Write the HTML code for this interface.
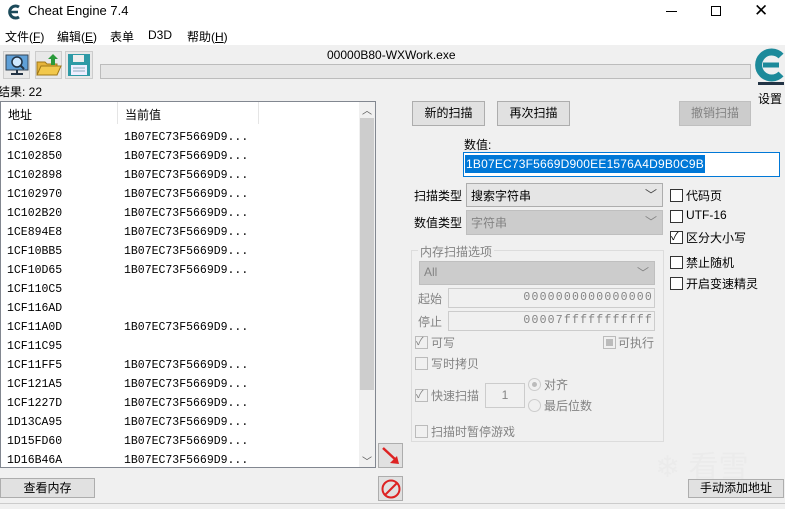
<!DOCTYPE html>
<html><head><meta charset="utf-8"><style>
*{box-sizing:border-box;margin:0;padding:0}
body{width:785px;height:509px;background:#f0f0f0;font-family:"Liberation Sans","Noto Sans CJK SC",sans-serif;font-size:12px;color:#000;position:relative;overflow:hidden}
.a{position:absolute;white-space:nowrap}
.btn{position:absolute;background:#e1e1e1;border:1px solid #adadad;text-align:center;font-size:12px}
.cb{position:absolute;width:13px;height:13px;border:1px solid #333;background:#fff}
.dis{color:#838383}
.mono{font-family:"Liberation Mono","DejaVu Sans Mono",monospace;font-size:11.5px}
</style></head><body>
<div class="a" style="left:0;top:0;width:785px;height:45px;background:#fff"></div>
<svg class="a" style="left:6px;top:4px" width="16" height="16" viewBox="0 0 16 16"><path d="M13 3A6 6 0 1 0 13 13" stroke="#1b4a5a" stroke-width="3" fill="none"/><path d="M5 8h7" stroke="#1b4a5a" stroke-width="2.5"/></svg>
<div class="a" style="left:28px;top:3px;font-size:13px">Cheat Engine 7.4</div>
<div class="a" style="left:666px;top:11px;width:11px;border-top:1px solid #000"></div>
<div class="a" style="left:711px;top:6px;width:10px;height:10px;border:1px solid #000"></div>
<div class="a" style="left:754px;top:2px;font-size:17px;line-height:17px">✕</div>
<div class="a" style="left:5px;top:28px">文件(<u>F</u>)</div>
<div class="a" style="left:57px;top:28px">编辑(<u>E</u>)</div>
<div class="a" style="left:110px;top:28px">表单</div>
<div class="a" style="left:148px;top:28px">D3D</div>
<div class="a" style="left:187px;top:28px">帮助(<u>H</u>)</div>
<div class="a" style="left:3px;top:51px;width:27px;height:28px;background:#e8e8e8;border:1px solid #ccc"></div>
<svg class="a" style="left:5px;top:53px" width="24" height="24"><rect x="1" y="2" width="22" height="15" fill="#5fa0d8" stroke="#345" /><circle cx="12" cy="9" r="5" fill="#cfe8ff" stroke="#234" stroke-width="1.5"/><path d="M15 12l4 4" stroke="#234" stroke-width="2"/><path d="M12 17v3M6 21h12" stroke="#234" stroke-width="2"/></svg>
<div class="a" style="left:35px;top:51px;width:27px;height:28px;background:#e8e8e8;border:1px solid #ccc"></div>
<svg class="a" style="left:36px;top:53px" width="26" height="24"><path d="M1 22V9h8l2 2h10v11z" fill="#e6b43a" stroke="#a07818"/><path d="M1 22l4-9h20l-4 9z" fill="#f2c84c" stroke="#a07818"/><path d="M17 1l-5 5h3v6h4V6h3z" fill="#2a9a3a"/></svg>
<div class="a" style="left:65px;top:51px;width:28px;height:28px;background:#e8e8e8;border:1px solid #ccc"></div>
<svg class="a" style="left:67px;top:53px" width="24" height="24"><rect x="1" y="1" width="22" height="22" fill="#2e9aa6"/><rect x="6" y="2" width="11" height="7" fill="#eee"/><rect x="4" y="12" width="16" height="10" fill="#eef"/><path d="M6 15h12M6 18h12" stroke="#8ab"/></svg>
<div class="a" style="left:327px;top:48px;font-size:12px">00000B80-WXWork.exe</div>
<div class="a" style="left:100px;top:64px;width:651px;height:15px;background:#e6e6e6;border:1px solid #bcbcbc"></div>
<svg class="a" style="left:755px;top:46px" width="30" height="42"><path d="M26 10A13 13 0 1 0 26 28" stroke="#1d8a9a" stroke-width="7" fill="none"/><path d="M8 19h16" stroke="#1d8a9a" stroke-width="5"/><rect x="3" y="36" width="26" height="3" fill="#234"/></svg>
<div class="a" style="left:758px;top:90px">设置</div>
<div class="a" style="left:-2px;top:83px">结果: 22</div>
<div class="a" style="left:0;top:101px;width:376px;height:367px;background:#fff;border:1px solid #828790"></div>
<div class="a" style="left:117px;top:102px;height:22px;border-left:1px solid #e5e5e5"></div>
<div class="a" style="left:258px;top:102px;height:22px;border-left:1px solid #e5e5e5"></div>
<div class="a" style="left:8px;top:106px">地址</div>
<div class="a" style="left:125px;top:106px">当前值</div>
<div class="a" style="left:359px;top:102px;width:16px;height:365px;background:#f0f0f0"></div>
<div class="a" style="left:360px;top:118px;width:14px;height:272px;background:#cdcdcd"></div>
<div class="a" style="left:362px;top:102px;font-size:10px;color:#555">︿</div>
<div class="a" style="left:362px;top:453px;font-size:10px;color:#555">﹀</div>
<div class="a mono" style="left:7px;top:128px;line-height:19px">1C1026E8<br>1C102850<br>1C102898<br>1C102970<br>1C102B20<br>1CE894E8<br>1CF10BB5<br>1CF10D65<br>1CF110C5<br>1CF116AD<br>1CF11A0D<br>1CF11C95<br>1CF11FF5<br>1CF121A5<br>1CF1227D<br>1D13CA95<br>1D15FD60<br>1D16B46A</div>
<div class="a mono" style="left:124px;top:128px;line-height:19px">1B07EC73F5669D9...<br>1B07EC73F5669D9...<br>1B07EC73F5669D9...<br>1B07EC73F5669D9...<br>1B07EC73F5669D9...<br>1B07EC73F5669D9...<br>1B07EC73F5669D9...<br>1B07EC73F5669D9...<br>&nbsp;<br>&nbsp;<br>1B07EC73F5669D9...<br>&nbsp;<br>1B07EC73F5669D9...<br>1B07EC73F5669D9...<br>1B07EC73F5669D9...<br>1B07EC73F5669D9...<br>1B07EC73F5669D9...<br>1B07EC73F5669D9...</div>
<div class="btn" style="left:412px;top:101px;width:73px;height:25px;line-height:23px">新的扫描</div>
<div class="btn" style="left:497px;top:101px;width:73px;height:25px;line-height:23px">再次扫描</div>
<div class="btn dis" style="left:679px;top:101px;width:72px;height:25px;line-height:23px;background:#ccc;border-color:#bfbfbf">撤销扫描</div>
<div class="a" style="left:464px;top:136px">数值:</div>
<div class="a" style="left:463px;top:152px;width:317px;height:25px;background:#fff;border:1px solid #0078d7"></div>
<div class="a" style="left:465px;top:155px;height:18px;background:#0078d7;color:#fff;font-size:12px;line-height:18px;padding:0 1px;letter-spacing:0.2px">1B07EC73F5669D900EE1576A4D9B0C9B</div>
<div class="a" style="left:414px;top:187px">扫描类型</div>
<div class="a" style="left:466px;top:183px;width:197px;height:24px;background:#e5e5e5;border:1px solid #adadad;padding:3px 4px">搜索字符串<span style="position:absolute;right:5px;top:2px;color:#444">﹀</span></div>
<div class="a" style="left:414px;top:214px">数值类型</div>
<div class="a dis" style="left:466px;top:210px;width:197px;height:25px;background:#ccc;border:1px solid #bfbfbf;padding:3px 4px">字符串<span style="position:absolute;right:5px;top:2px">﹀</span></div>
<div class="cb" style="left:670px;top:189px"></div><div class="a" style="left:686px;top:187px">代码页</div>
<div class="cb" style="left:670px;top:210px"></div><div class="a" style="left:686px;top:208px">UTF-16</div>
<div class="cb" style="left:670px;top:231px;font-size:11px;line-height:11px">✓</div><div class="a" style="left:686px;top:229px">区分大小写</div>
<div class="cb" style="left:670px;top:256px"></div><div class="a" style="left:686px;top:254px">禁止随机</div>
<div class="cb" style="left:670px;top:277px"></div><div class="a" style="left:686px;top:275px">开启变速精灵</div>
<div class="a" style="left:411px;top:250px;width:253px;height:192px;border:1px solid #dcdcdc"></div>
<div class="a dis" style="left:418px;top:243px;background:#f0f0f0;padding:0 2px">内存扫描选项</div>
<div class="a dis" style="left:419px;top:261px;width:236px;height:24px;background:#ccc;border:1px solid #bfbfbf;padding:3px 4px">All<span style="position:absolute;right:5px;top:2px">﹀</span></div>
<div class="a dis" style="left:418px;top:290px">起始</div>
<div class="a mono dis" style="left:448px;top:288px;width:207px;height:20px;border:1px solid #ccc;text-align:right;padding:2px 1px;letter-spacing:1.2px">0000000000000000</div>
<div class="a dis" style="left:418px;top:313px">停止</div>
<div class="a mono dis" style="left:448px;top:311px;width:207px;height:20px;border:1px solid #ccc;text-align:right;padding:2px 1px;letter-spacing:1.2px">00007fffffffffff</div>
<div class="cb dis" style="left:415px;top:336px;border-color:#bbb;background:#f0f0f0;font-size:11px;line-height:11px">✓</div><div class="a dis" style="left:431px;top:334px">可写</div>
<div class="cb" style="left:603px;top:336px;border-color:#bbb;background:#f0f0f0"><div style="margin:2px;width:7px;height:7px;background:#bbb"></div></div><div class="a dis" style="left:618px;top:334px">可执行</div>
<div class="cb" style="left:415px;top:357px;border-color:#bbb;background:#f0f0f0"></div><div class="a dis" style="left:431px;top:355px">写时拷贝</div>
<div class="cb dis" style="left:415px;top:389px;border-color:#bbb;background:#f0f0f0;font-size:11px;line-height:11px">✓</div><div class="a dis" style="left:431px;top:387px">快速扫描</div>
<div class="a dis" style="left:485px;top:383px;width:40px;height:25px;border:1px solid #ccc;text-align:center;line-height:23px">1</div>
<div class="a" style="left:528px;top:378px;width:13px;height:13px;border-radius:50%;border:1px solid #ccc;background:#f0f0f0"><div style="margin:3px;width:5px;height:5px;border-radius:50%;background:#bbb"></div></div><div class="a dis" style="left:544px;top:376px">对齐</div>
<div class="a" style="left:528px;top:399px;width:13px;height:13px;border-radius:50%;border:1px solid #ccc;background:#f0f0f0"></div><div class="a dis" style="left:544px;top:397px">最后位数</div>
<div class="cb" style="left:415px;top:425px;border-color:#bbb;background:#f0f0f0"></div><div class="a dis" style="left:431px;top:423px">扫描时暂停游戏</div>
<div class="a" style="left:378px;top:443px;width:25px;height:25px;background:#e1e1e1;border:1px solid #adadad"></div>
<svg class="a" style="left:380px;top:445px" width="22" height="22"><path d="M3 3L17 16" stroke="#d22" stroke-width="2.5"/><path d="M19 19l-9-1 7-7z" fill="#d22"/></svg>
<div class="a" style="left:378px;top:476px;width:25px;height:25px;background:#e1e1e1;border:1px solid #adadad"></div>
<svg class="a" style="left:380px;top:478px" width="22" height="22"><circle cx="11" cy="11" r="8.5" fill="none" stroke="#d22" stroke-width="2"/><path d="M5 17L17 5" stroke="#d22" stroke-width="2"/></svg>
<div class="a" style="left:655px;top:442px;font-size:30px;color:#ebebeb">❄ 看雪</div>
<div class="btn" style="left:0;top:478px;width:95px;height:20px;line-height:18px">查看内存</div>
<div class="btn" style="left:688px;top:479px;width:96px;height:19px;line-height:17px">手动添加地址</div>
<div class="a" style="left:0;top:503px;width:785px;border-top:1px solid #ccc"></div>
</body></html>
